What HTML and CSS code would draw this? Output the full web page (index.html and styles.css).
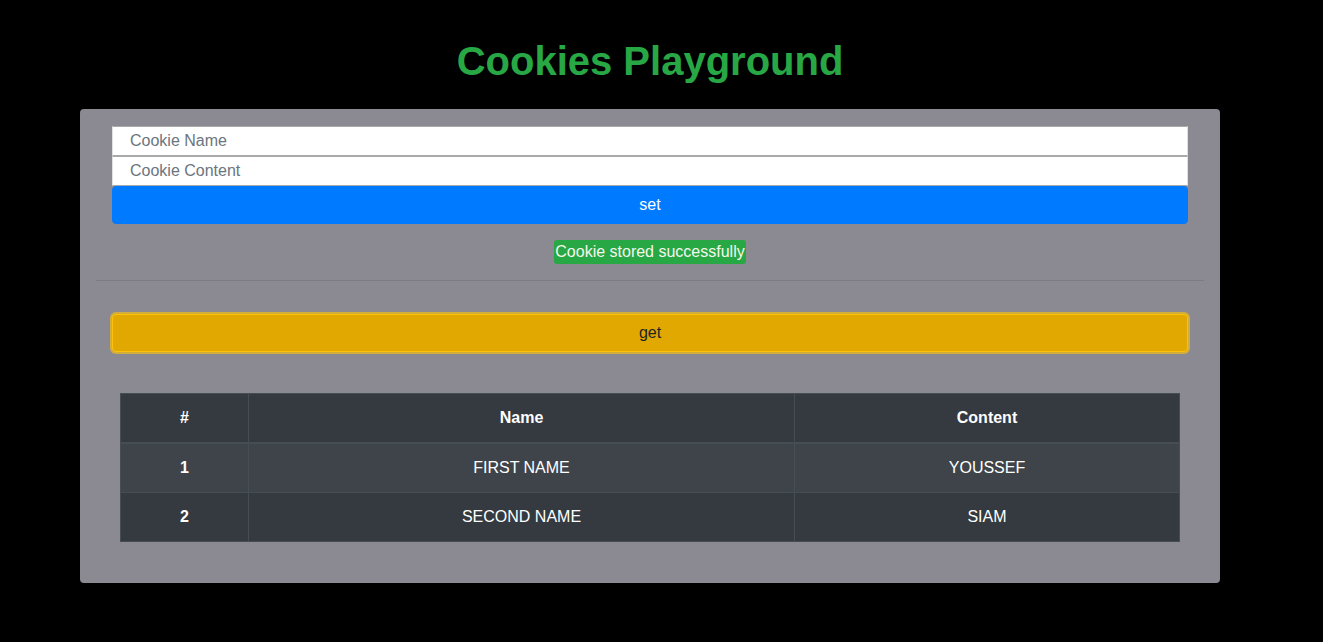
FILE: index.html
```html
<!DOCTYPE html>
<html>
<head>
<meta charset="utf-8">
<title>Cookies Playground</title>
<link rel="stylesheet" href="styles.css">
</head>
<body>
<div class="page">
<h1 class="title">Cookies Playground</h1>
<main class="panel">
  <form class="cookie-form">
    <input class="field" type="text" placeholder="Cookie Name">
    <input class="field" type="text" placeholder="Cookie Content">
    <button class="btn btn-set" type="button">set</button>
  </form>
  <div class="status"><span class="badge">Cookie stored successfully</span></div>
  <hr class="divider">
  <div class="get-wrap">
    <button class="btn btn-get" type="button">get</button>
  </div>
  <div class="table-wrap">
    <table class="cookies">
      <thead>
        <tr><th class="c-num">#</th><th class="c-name">Name</th><th class="c-content">Content</th></tr>
      </thead>
      <tbody>
        <tr class="odd"><th>1</th><td>FIRST NAME</td><td>YOUSSEF</td></tr>
        <tr><th>2</th><td>SECOND NAME</td><td>SIAM</td></tr>
      </tbody>
    </table>
  </div>
</main>
</div>
</body>
</html>
```

FILE: styles.css
```css
html, body {
  margin: 0;
  padding: 0;
  background: #000;
}
body {
  font-family: "Liberation Sans", Arial, sans-serif;
  font-size: 16px;
  line-height: 24px;
  padding-top: 37px;
  color: #212529;
}
.page {
  width: 1300px;
}
.title {
  margin: 0 0 24px;
  text-align: center;
  font-size: 40px;
  line-height: 48px;
  font-weight: 700;
  color: #28a745;
}
.panel {
  display: block;
  width: 1140px;
  margin: 0 auto;
  box-sizing: border-box;
  background: #8b8992;
  border-radius: 4px;
  padding: 17px 16px 41px;
}
.cookie-form {
  display: flex;
  flex-direction: column;
  margin: 0 16px;
}
.field {
  height: 30px;
  box-sizing: border-box;
  margin: 0;
  border: 1px solid #a9a9a9;
  border-left-color: #e0e0e0;
  border-right-color: #e0e0e0;
  background: #fff;
  padding: 0 17px;
  font-family: "Liberation Sans", Arial, sans-serif;
  font-size: 16px;
  color: #495057;
}
.field::placeholder {
  color: #6c757d;
}
.btn {
  display: block;
  width: 100%;
  height: 38px;
  box-sizing: border-box;
  border-radius: 4px;
  font-family: "Liberation Sans", Arial, sans-serif;
  font-size: 16px;
  line-height: 24px;
  cursor: pointer;
}
.btn-set {
  background: #007bff;
  border: 1px solid #007bff;
  color: #fff;
}
.status {
  text-align: center;
  margin-top: 16px;
}
.badge {
  display: inline-block;
  background: #28a745;
  color: #f4f8ec;
  border-radius: 3px;
  padding: 0 1px;
  line-height: 24px;
}
.divider {
  margin: 16px 0 0;
  border: 0;
  border-top: 1px solid rgba(0, 0, 0, 0.1);
}
.get-wrap {
  margin: 33px 16px 0;
}
.btn-get {
  background: #e0a800;
  border: 1px solid #ffc107;
  color: #212529;
  box-shadow: 0 0 0 2px rgba(240, 190, 20, 0.7);
}
.table-wrap {
  padding: 41px 24px 0;
}
.cookies {
  width: 100%;
  border-collapse: collapse;
  background: #343a40;
  color: #fff;
  border: 1px solid #454d55;
}
.cookies th,
.cookies td {
  border: 1px solid #454d55;
  padding: 12px;
  text-align: center;
  line-height: 24px;
  height: 24px;
}
.cookies thead th {
  border-bottom-width: 2px;
}
.cookies th {
  font-weight: 700;
}
.cookies td {
  font-weight: 400;
}
.cookies .odd {
  background: #3e444a;
}
.c-num { width: 103px; }
.c-name { width: 521px; }
```
